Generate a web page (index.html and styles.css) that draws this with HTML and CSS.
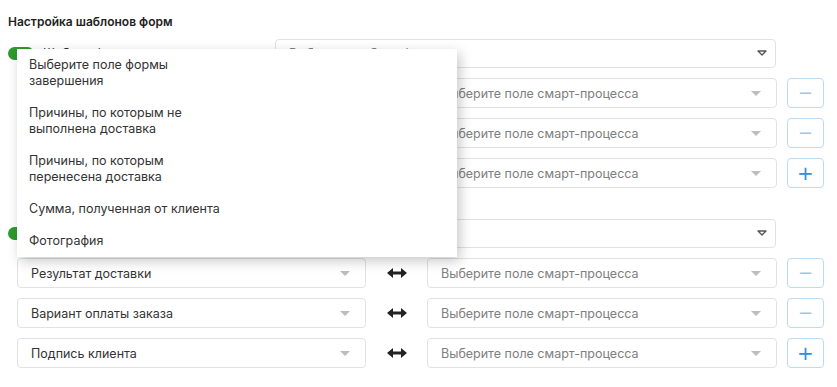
FILE: index.html
```html
<!DOCTYPE html>
<html lang="ru">
<head>
  <meta charset="UTF-8" />
  <meta name="viewport" content="width=device-width, initial-scale=1.0"/>
  <title>Настройка шаблонов форм</title>
  <link rel="stylesheet" href="styles.css">
</head>
<body>

<div class="page">
  <h3 class="title">Настройка шаблонов форм</h3>

  <!-- Section 1 -->
  <div class="section">
    <div class="section-head">
      <div class="switch-wrap">
        <span class="switch on"><span class="knob"></span></span>
        <span class="switch-label">Шаблон формы завершения</span>
      </div>
      <div class="select template">
        <span class="placeholder">Выберите шаблон формы</span>
        <svg class="caret-outline" width="10" height="6" viewBox="0 0 10 6"><path d="M1 1h8L5 5z" fill="none" stroke="#555" stroke-width="1.3" stroke-linejoin="round"/></svg>
      </div>
    </div>

    <div class="row">
      <div class="select field"><span class="value"></span><span class="caret"></span></div>
      <div class="link-icon"><svg width="20" height="12" viewBox="0 0 20 12"><path d="M5 6h10" stroke="#222" stroke-width="3"/><path d="M0 6l6-5v10z M20 6l-6-5v10z" fill="#222"/></svg></div>
      <div class="select field"><span class="placeholder">Выберите поле смарт-процесса</span><span class="caret"></span></div>
      <button class="btn-icon minus">−</button>
    </div>

    <div class="row">
      <div class="select field"><span class="value"></span><span class="caret"></span></div>
      <div class="link-icon"><svg width="20" height="12" viewBox="0 0 20 12"><path d="M5 6h10" stroke="#222" stroke-width="3"/><path d="M0 6l6-5v10z M20 6l-6-5v10z" fill="#222"/></svg></div>
      <div class="select field"><span class="placeholder">Выберите поле смарт-процесса</span><span class="caret"></span></div>
      <button class="btn-icon minus">−</button>
    </div>

    <div class="row">
      <div class="select field"><span class="value"></span><span class="caret"></span></div>
      <div class="link-icon"><svg width="20" height="12" viewBox="0 0 20 12"><path d="M5 6h10" stroke="#222" stroke-width="3"/><path d="M0 6l6-5v10z M20 6l-6-5v10z" fill="#222"/></svg></div>
      <div class="select field"><span class="placeholder">Выберите поле смарт-процесса</span><span class="caret"></span></div>
      <button class="btn-icon plus">+</button>
    </div>
  </div>

  <!-- Section 2 -->
  <div class="section">
    <div class="section-head">
      <div class="switch-wrap">
        <span class="switch on"><span class="knob"></span></span>
        <span class="switch-label">Шаблон формы доставки</span>
      </div>
      <div class="select template">
        <span class="placeholder">Выберите шаблон формы</span>
        <svg class="caret-outline" width="10" height="6" viewBox="0 0 10 6"><path d="M1 1h8L5 5z" fill="none" stroke="#555" stroke-width="1.3" stroke-linejoin="round"/></svg>
      </div>
    </div>

    <div class="row">
      <div class="select field"><span class="value">Результат доставки</span><span class="caret"></span></div>
      <div class="link-icon"><svg width="20" height="12" viewBox="0 0 20 12"><path d="M5 6h10" stroke="#222" stroke-width="3"/><path d="M0 6l6-5v10z M20 6l-6-5v10z" fill="#222"/></svg></div>
      <div class="select field"><span class="placeholder">Выберите поле смарт-процесса</span><span class="caret"></span></div>
      <button class="btn-icon minus">−</button>
    </div>

    <div class="row">
      <div class="select field"><span class="value">Вариант оплаты заказа</span><span class="caret"></span></div>
      <div class="link-icon"><svg width="20" height="12" viewBox="0 0 20 12"><path d="M5 6h10" stroke="#222" stroke-width="3"/><path d="M0 6l6-5v10z M20 6l-6-5v10z" fill="#222"/></svg></div>
      <div class="select field"><span class="placeholder">Выберите поле смарт-процесса</span><span class="caret"></span></div>
      <button class="btn-icon minus">−</button>
    </div>

    <div class="row">
      <div class="select field"><span class="value">Подпись клиента</span><span class="caret"></span></div>
      <div class="link-icon"><svg width="20" height="12" viewBox="0 0 20 12"><path d="M5 6h10" stroke="#222" stroke-width="3"/><path d="M0 6l6-5v10z M20 6l-6-5v10z" fill="#222"/></svg></div>
      <div class="select field"><span class="placeholder">Выберите поле смарт-процесса</span><span class="caret"></span></div>
      <button class="btn-icon plus">+</button>
    </div>
  </div>

  <!-- Open dropdown -->
  <ul class="dropdown">
    <li>Выберите поле формы завершения</li>
    <li>Причины, по которым не выполнена доставка</li>
    <li>Причины, по которым перенесена доставка</li>
    <li>Сумма, полученная от клиента</li>
    <li>Фотография</li>
  </ul>
</div>

</body>
</html>
```

FILE: styles.css
```css
body {
  margin: 0;
  font-family: Inter, "Noto Sans", sans-serif;
  color: #333;
  background: #fff;
}

.page {
  position: relative;
  padding: 14px 8px 0;
}

.title {
  margin: 0 0 8px;
  font-size: 12px;
  line-height: 16px;
  font-weight: 600;
  color: #222;
}

.section {
  display: flex;
  flex-direction: column;
  gap: 10px;
}

.section + .section {
  margin-top: 30px;
}

.section-head {
  display: flex;
  align-items: center;
  height: 30px;
}

.switch-wrap {
  width: 267px;
  display: flex;
  align-items: center;
  gap: 9px;
}

.switch {
  position: relative;
  width: 26px;
  height: 13px;
  border-radius: 7px;
  background: #2e9a2c;
}

.switch .knob {
  position: absolute;
  top: 2px;
  right: 2px;
  width: 9px;
  height: 9px;
  border-radius: 50%;
  background: #fff;
}

.switch-label {
  font-size: 12.5px;
  color: #333;
}

.select {
  box-sizing: border-box;
  height: 30px;
  display: flex;
  align-items: center;
  justify-content: space-between;
  padding: 0 13px;
  border: 1px solid #e2e2e2;
  border-radius: 4px;
  background: #fff;
  font-size: 12.5px;
}

.select.template {
  width: 501px;
  height: 29px;
  padding-right: 8px;
}

.row {
  display: flex;
  align-items: center;
  margin-left: 9px;
  height: 30px;
}

.select.field {
  width: 349px;
}

.field + .link-icon + .field {
  width: 350px;
  margin-right: 10px;
}

.value {
  color: #333;
}

.placeholder {
  color: #7e7e7e;
}

.caret {
  width: 0;
  height: 0;
  border-left: 5px solid transparent;
  border-right: 5px solid transparent;
  border-top: 5px solid #bdbdbd;
  margin-right: 2px;
}

.link-icon {
  width: 61px;
  display: flex;
  justify-content: center;
}

.btn-icon {
  box-sizing: border-box;
  width: 37px;
  height: 30px;
  border: 1px solid #b9dcf3;
  border-radius: 4px;
  background: #fff;
  font-family: "DejaVu Sans", sans-serif;
  font-size: 18px;
  line-height: 1;
  padding: 0;
}

.btn-icon.minus {
  color: #9cc7ea;
}

.btn-icon.plus {
  color: #2f8fdc;
  font-size: 20px;
}

.dropdown {
  position: absolute;
  left: 17px;
  top: 49px;
  width: 440px;
  margin: 0;
  padding: 0;
  list-style: none;
  background: #fff;
  box-shadow: 3px 4px 12px rgba(0, 0, 0, 0.22);
  z-index: 5;
}

.dropdown li {
  padding: 8px 12px;
  font-size: 12.5px;
  line-height: 16px;
  color: #333;
  max-width: 192px;
}
```
